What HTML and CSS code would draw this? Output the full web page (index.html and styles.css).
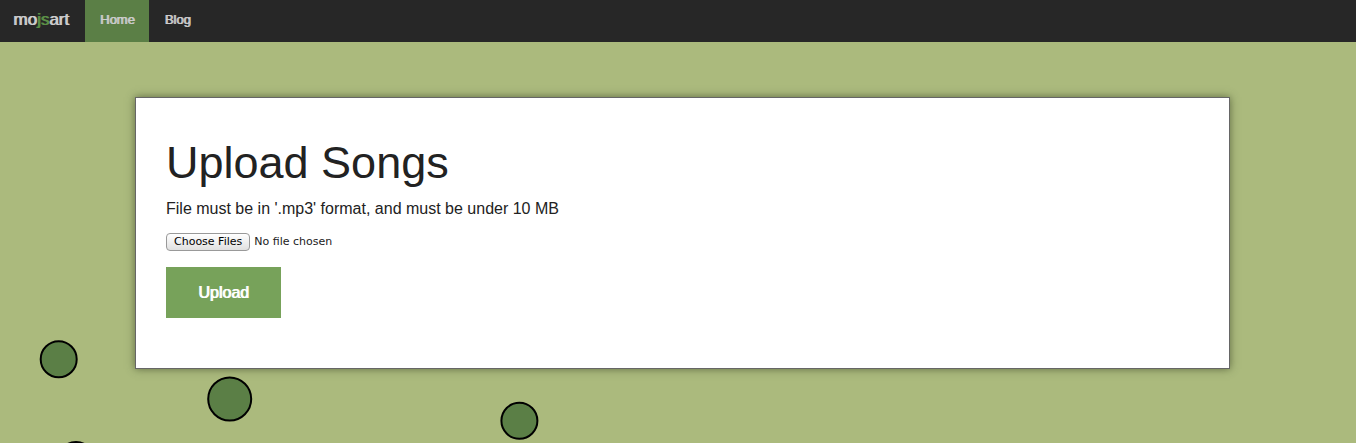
FILE: index.html
```html
<!DOCTYPE html>
<html lang="en">
<head>
<meta charset="utf-8">
<meta name="viewport" content="width=device-width, initial-scale=1">
<title>mojsart</title>
<link rel="stylesheet" href="styles.css">
</head>
<body>
<svg class="bubbles" aria-hidden="true">
  <circle cx="58.700" cy="359.300" r="18"/>
  <circle cx="229.700" cy="399" r="21.500"/>
  <circle cx="519.400" cy="420.800" r="18"/>
  <circle cx="76" cy="460" r="18"/>
</svg>
<nav class="topbar">
  <a class="brand" href="#">mo<span class="brand-accent">js</span>art</a>
  <a class="nav-link active" href="#">Home</a>
  <a class="nav-link" href="#">Blog</a>
</nav>
<main class="panel">
  <h1 class="title">Upload Songs</h1>
  <form class="upload-form">
    <label class="hint" for="songs">File must be in '.mp3' format, and must be under 10 MB</label>
    <input class="picker" id="songs" type="file" accept=".mp3" multiple>
    <button class="submit" type="submit">Upload</button>
  </form>
</main>
</body>
</html>
```
FILE: styles.css
```css
* {
  box-sizing: border-box;
}

html {
  height: 100%;
}

body {
  margin: 0;
  min-height: 100%;
  background: #abba7d;
  color: #222;
  font-family: "Liberation Sans", Arial, sans-serif;
  font-size: 16px;
}

/* decorative canvas behind the page */
.bubbles {
  position: absolute;
  inset: 0;
  z-index: -1;
  width: 100%;
  height: 100%;
}

.bubbles circle {
  fill: #5b7f46;
  stroke: #000;
  stroke-width: 2px;
}

.topbar {
  display: flex;
  background: #272727;
  line-height: 40px;
}

.topbar a {
  padding: 0 15px 2px;
  color: #ccc;
  text-decoration: none;
  text-shadow: 1px 0 currentColor;
}

.topbar .brand {
  padding: 0 16px 2px 13px;
  font-size: 17px;
}

.brand-accent {
  color: #5b8f46;
  text-shadow: 1px 0 currentColor;
}

.nav-link {
  font-size: 13px;
}

.topbar .active {
  background: #5b7f46;
}

.panel {
  margin: 55px 126px 0 135px;
  padding: 34px 30px 50px;
  border: 1px solid #666;
  background: #fff;
  box-shadow: 0 0 8px rgba(60, 70, 40, 0.7);
}

.title {
  margin: 0 0 2px;
  font-size: 45px;
  font-weight: normal;
  line-height: 62px;
}

.upload-form {
  display: flex;
  flex-direction: column;
  align-items: flex-start;
}

.hint {
  line-height: 26px;
}

.picker {
  margin: 11px 0 16px;
  color: #222;
  font: 11px/16px "DejaVu Sans", sans-serif;
}

.picker::file-selector-button {
  height: 18px;
  margin: 0 4px 0 0;
  padding: 0 7px;
  border: 1px solid #999;
  border-radius: 4px;
  background: linear-gradient(#fff, #e0e0e0);
  color: #000;
  font: inherit;
}

.submit {
  padding: 16px 32px;
  border: 0;
  background: #77a25a;
  color: #fff;
  font: 16px/19px "Liberation Sans", Arial, sans-serif;
  text-shadow: 1px 0 currentColor;
}
```
